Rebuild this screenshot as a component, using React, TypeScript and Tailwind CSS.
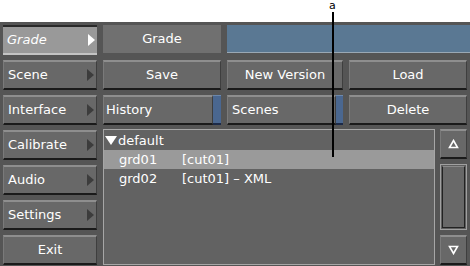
import React from "react";

const font = { fontFamily: '"DejaVu Sans", "Liberation Sans", sans-serif' };

function Arrow({ light }: { light?: boolean }) {
  return (
    <svg width="7" height="12" viewBox="0 0 7 12" className="shrink-0">
      <path d="M0 0 L7 6 L0 12 Z" fill={light ? "#ffffff" : "#3c3c3c"} />
    </svg>
  );
}

function Btn({
  children,
  className = "",
}: {
  children?: React.ReactNode;
  className?: string;
}) {
  return (
    <div
      className={
        "h-[30px] flex items-center bg-[#686868] border-t-2 border-t-[#8e8e8e] border-l border-l-[#7a7a7a] border-r border-r-[#3e3e3e] border-b-2 border-b-[#1a1a1a] text-white text-[13px] " +
        className
      }
    >
      {children}
    </div>
  );
}

function SideBtn({ label, active }: { label: string; active?: boolean }) {
  if (active) {
    return (
      <div className="h-[30px] flex items-center justify-between pl-[4px] pr-[2px] bg-[#999999] border-t-2 border-t-[#2a2a2a] border-b-2 border-b-[#c4c4c4] text-white text-[13px] italic">
        <span>{label}</span>
        <Arrow light />
      </div>
    );
  }
  return (
    <Btn className="justify-between pl-[4px] pr-[2px]">
      <span>{label}</span>
      <Arrow />
    </Btn>
  );
}

function Tri({ up }: { up?: boolean }) {
  return (
    <svg width="11" height="10" viewBox="0 0 11 10">
      <path
        d={up ? "M5.5 1.5 L9.5 8.5 L1.5 8.5 Z" : "M5.5 8.5 L9.5 1.5 L1.5 1.5 Z"}
        fill="none"
        stroke="#ffffff"
        strokeWidth="1.6"
      />
    </svg>
  );
}

export default function App() {
  const menu = ["Grade", "Scene", "Interface", "Calibrate", "Audio", "Settings"];

  return (
    <div className="relative w-[470px] h-[266px] bg-white overflow-hidden" style={font}>
      {/* callout */}
      <div className="absolute left-[329px] top-[0px] text-[11px] text-black leading-[11px]">
        a
      </div>
      <div className="absolute left-[332px] top-[12px] w-[2px] h-[145px] bg-black z-10" />

      <div className="mt-[22px] h-[244px] bg-[#555555] flex pl-[3px] pt-[3px]">
        {/* Left menu */}
        <div className="w-[94px] flex flex-col gap-[5px]">
          {menu.map((m, i) => (
            <SideBtn key={m} label={m} active={i === 0} />
          ))}
          <Btn className="justify-center">Exit</Btn>
        </div>

        {/* Main area */}
        <div className="flex-1 ml-[6px] flex flex-col gap-[5px]">
          <div className="flex gap-[6px] h-[30px]">
            <div className="w-[118px] h-[28px] bg-[#707070] flex items-center justify-center text-white text-[13px]">
              Grade
            </div>
            <div className="flex-1 h-[28px] bg-[#5a7893] border-b border-b-[#9aa8b4]" />
          </div>

          <div className="flex gap-[6px] pr-[3px]">
            <Btn className="w-[118px] justify-center">Save</Btn>
            <Btn className="w-[116px] justify-center">New Version</Btn>
            <Btn className="w-[118px] justify-center">Load</Btn>
          </div>

          <div className="flex gap-[6px] pr-[3px]">
            <div className="w-[118px] flex">
              <Btn className="flex-1 pl-[2px]">History</Btn>
              <div className="w-[8px] h-[30px] bg-[#4a6790] border-t border-t-[#6c88ac] border-b-2 border-b-[#1c2a48]" />
            </div>
            <div className="w-[116px] flex">
              <Btn className="flex-1 pl-[4px]">Scenes</Btn>
              <div className="w-[7px] h-[30px] bg-[#4a6790] border-t border-t-[#6c88ac] border-b-2 border-b-[#1c2a48]" />
            </div>
            <Btn className="w-[118px] justify-center">Delete</Btn>
          </div>

          <div className="flex gap-[5px] pr-[3px] -mt-[1px]">
            {/* list */}
            <div className="w-[332px] h-[136px] bg-[#626262] border border-[#a6a6a6] text-white text-[13px] leading-[19px]">
              <div className="flex items-center pl-[1px] h-[20px]">
                <svg width="12" height="9" viewBox="0 0 12 9" className="mr-[1px]">
                  <path d="M0 0 L12 0 L6 9 Z" fill="#ffffff" />
                </svg>
                <span>default</span>
              </div>
              <div className="flex h-[19px] bg-[#9a9a9a] pl-[15px]">
                <span className="w-[63px]">grd01</span>
                <span>[cut01]</span>
              </div>
              <div className="flex h-[19px] pl-[15px]">
                <span className="w-[63px]">grd02</span>
                <span>[cut01] – XML</span>
              </div>
            </div>

            {/* scrollbar */}
            <div className="w-[27px] flex flex-col gap-[5px]">
              <Btn className="justify-center h-[29px]">
                <Tri up />
              </Btn>
              <div className="h-[66px] border border-[#a0a0a0] bg-[#5e5e5e] p-[1px]">
                <div className="h-full bg-[#686868] border border-[#222222] border-t-[#8a8a8a]" />
              </div>
              <Btn className="justify-center h-[29px]">
                <Tri />
              </Btn>
            </div>
          </div>
        </div>
      </div>
    </div>
  );
}
